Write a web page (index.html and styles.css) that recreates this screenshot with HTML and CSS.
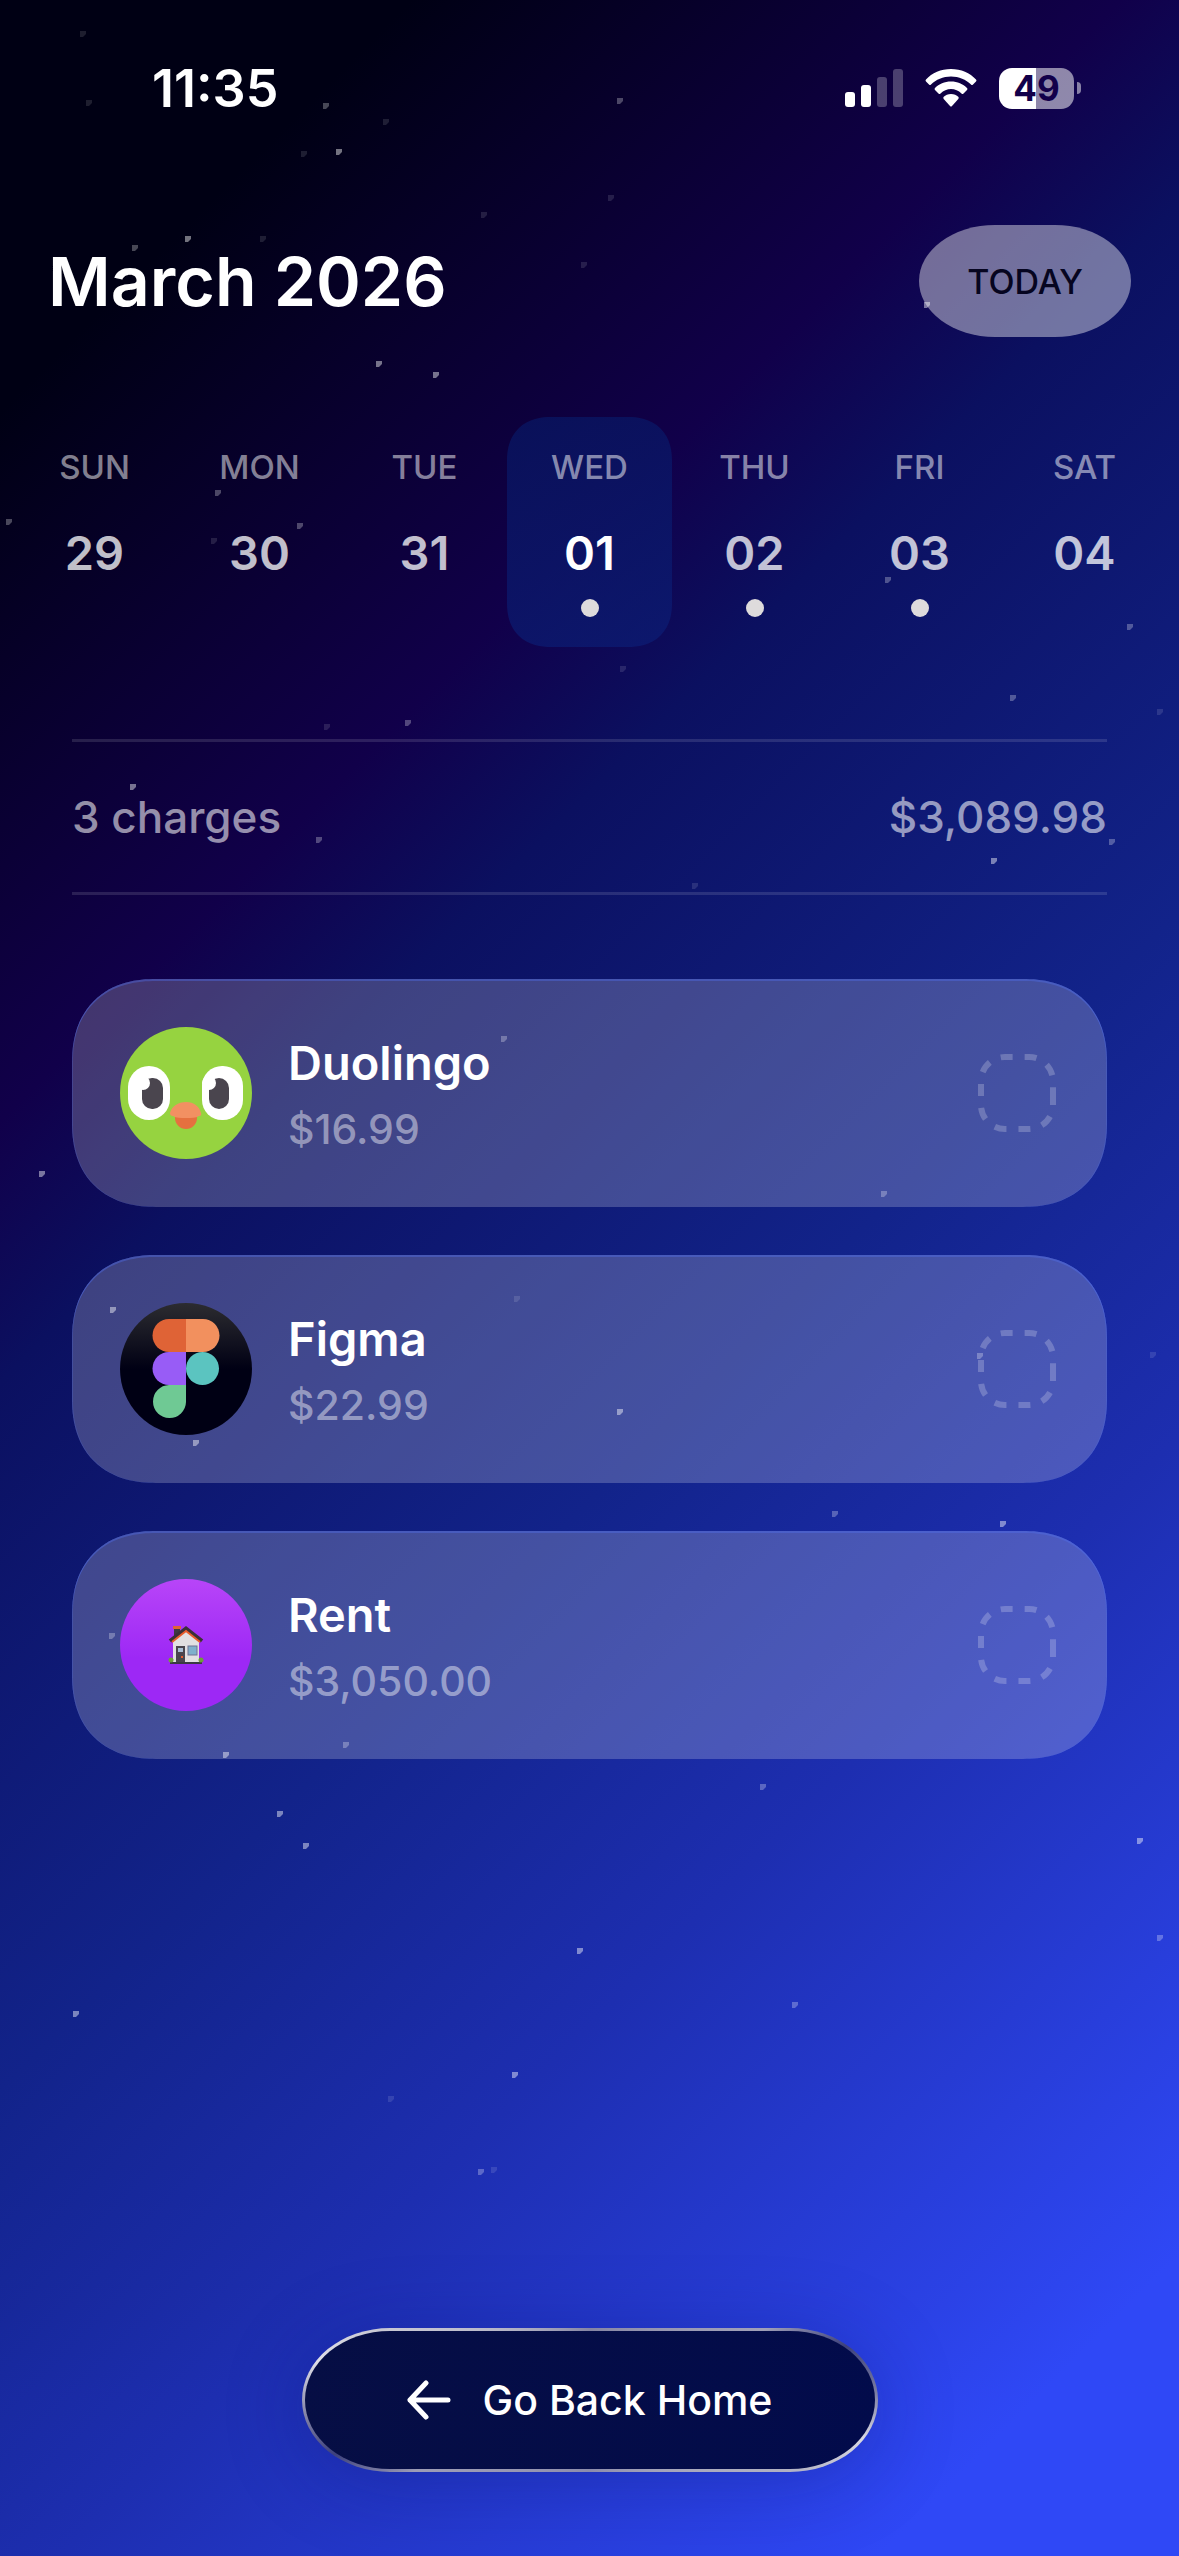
FILE: index.html
```html
<!DOCTYPE html>
<html lang="en">
<head>
<meta charset="utf-8">
<meta name="viewport" content="width=device-width, initial-scale=1">
<title>March 2026</title>
<link rel="stylesheet" href="styles.css">
</head>
<body>
<div class="screen">
  <header class="status">
    <time class="clock">11:35</time>
    <div class="indicators">
      <svg class="signal" viewBox="0 0 58 38" role="img" aria-label="Signal">
        <g fill="#fff"><rect x="0" y="23" width="10" height="15" rx="3"/><rect x="16" y="16" width="10" height="22" rx="3"/></g>
        <g fill="#fff" opacity=".25"><rect x="32" y="8" width="10" height="30" rx="3"/><rect x="48" y="0" width="10" height="38" rx="3"/></g>
      </svg>
      <svg class="wifi" viewBox="0 0 52 38" role="img" aria-label="Wi-Fi">
        <g fill="#fff">
          <path d="M26 0C36 0 45 4 51 10.500Q52 11.500 51 12.500L48 15.500Q47 16.500 46 15.500C41 10.500 34 7.500 26 7.500S11 10.500 6 15.500Q5 16.500 4 15.500L1 12.500Q0 11.500 1 10.500C7 4 16 0 26 0Z"/>
          <path d="M26 12.500C32.500 12.500 38 15 42 19Q43 20 42 21L38.500 24.500Q37.500 25.500 36.500 24.500C33.500 21.700 30 20 26 20S18.500 21.700 15.500 24.500Q14.500 25.500 13.500 24.500L10 21Q9 20 10 19C14 15 19.500 12.500 26 12.500Z"/>
          <path d="M26 25C29 25 31.500 26 33.500 28Q34 29 33.300 30L27 37Q26 38 25 37L18.700 30Q18 29 18.500 28C20.500 26 23 25 26 25Z"/>
        </g>
      </svg>
      <div class="battery"><span class="level">49</span></div>
    </div>
  </header>

  <div class="heading">
    <h1>March 2026</h1>
    <button class="today" type="button">TODAY</button>
  </div>

  <nav class="week" aria-label="Week">
    <button class="day" type="button"><span class="name">SUN</span><span class="num">29</span></button>
    <button class="day" type="button"><span class="name">MON</span><span class="num">30</span></button>
    <button class="day" type="button"><span class="name">TUE</span><span class="num">31</span></button>
    <button class="day selected" type="button" aria-current="date"><span class="name">WED</span><span class="num">01</span><span class="dot"></span></button>
    <button class="day" type="button"><span class="name">THU</span><span class="num">02</span><span class="dot"></span></button>
    <button class="day" type="button"><span class="name">FRI</span><span class="num">03</span><span class="dot"></span></button>
    <button class="day" type="button"><span class="name">SAT</span><span class="num">04</span></button>
  </nav>

  <main class="content">
    <div class="summary"><span>3 charges</span><span>$3,089.98</span></div>

    <ul class="charges">
      <li>
        <label class="card">
          <svg class="avatar" viewBox="0 0 132 132" aria-hidden="true">
            <circle cx="66" cy="66" r="66" fill="#96d340"/>
            <rect x="8" y="39" width="42" height="54" rx="21" fill="#fff"/>
            <rect x="82" y="39" width="41" height="54" rx="20" fill="#fff"/>
            <rect x="22" y="51" width="21" height="31" rx="10" fill="#4a454e"/>
            <rect x="89" y="51" width="20" height="31" rx="10" fill="#4a454e"/>
            <circle cx="23" cy="56" r="7" fill="#fff"/>
            <circle cx="89" cy="56" r="7" fill="#fff"/>
            <path d="M55 86h22v5a11 11 0 0 1-22 0Z" fill="#e5703f"/>
            <path d="M50 86C52 79 58 75 66 75S79 79 81 86Q82 89 79 89C76 91 71 91 66 91S56 91 53 89Q50 89 50 86Z" fill="#f29062"/>
          </svg>
          <span class="info"><span class="title">Duolingo</span><span class="price">$16.99</span></span>
          <span class="check"><input type="checkbox"><svg viewBox="0 0 84 84" aria-hidden="true"><path d="M78 42V54A24 24 0 0 1 54 78H30A24 24 0 0 1 6 54V30A24 24 0 0 1 30 6H54A24 24 0 0 1 78 30Z"/></svg></span>
        </label>
      </li>
      <li>
        <label class="card">
          <svg class="avatar" viewBox="0 0 132 132" aria-hidden="true">
            <defs><linearGradient id="ink" x2="0" y2="1"><stop offset="0" stop-color="#2c2c30"/><stop offset=".5" stop-color="#000014"/></linearGradient></defs>
            <circle cx="66" cy="66" r="66" fill="url(#ink)"/>
            <path d="M66 16H49a16.500 16.500 0 0 0 0 33H66Z" fill="#df6336"/>
            <path d="M66 16h17a16.500 16.500 0 0 1 0 33H66Z" fill="#f2905e"/>
            <path d="M66 49H49a16.500 16.500 0 0 0 0 33H66Z" fill="#985cf6"/>
            <circle cx="82.500" cy="65.500" r="16.500" fill="#5bc4c0"/>
            <path d="M66 82H49a16.500 16.500 0 1 0 17 17Z" fill="#6fc994"/>
          </svg>
          <span class="info"><span class="title">Figma</span><span class="price">$22.99</span></span>
          <span class="check"><input type="checkbox"><svg viewBox="0 0 84 84" aria-hidden="true"><path d="M78 42V54A24 24 0 0 1 54 78H30A24 24 0 0 1 6 54V30A24 24 0 0 1 30 6H54A24 24 0 0 1 78 30Z"/></svg></span>
        </label>
      </li>
      <li>
        <label class="card">
          <svg class="avatar" viewBox="0 0 132 132" aria-hidden="true">
            <defs><linearGradient id="violet" x2="0" y2="1"><stop offset="0" stop-color="#b845f8"/><stop offset=".6" stop-color="#9d28f5"/></linearGradient></defs>
            <circle cx="66" cy="66" r="66" fill="url(#violet)"/>
            <rect x="54" y="48" width="6" height="10" fill="#3c3a42"/>
            <rect x="53" y="47" width="8" height="3" fill="#df6336"/>
            <path d="M53 61 66 50 79 61V84H53Z" fill="#e2e0e2"/>
            <path d="M50 62 66 49.500 82 62" fill="none" stroke="#3a3036" stroke-width="4"/>
            <path d="M52 63 66 52 80 63" fill="none" stroke="#e85c2c" stroke-width="2"/>
            <rect x="56" y="67" width="9" height="16" fill="#4a454e"/>
            <rect x="58" y="69" width="5" height="4" fill="#a9bdd4"/>
            <rect x="61" y="77" width="2" height="2" fill="#e85c2c"/>
            <rect x="68" y="67" width="9" height="9" fill="#7fb0cc" stroke="#707294" stroke-width="1"/>
            <path d="M50 84h32" stroke="#3a3a42" stroke-width="2"/>
            <circle cx="51" cy="81" r="2.500" fill="#6f9e3a"/>
            <circle cx="81" cy="81" r="2.500" fill="#6f9e3a"/>
          </svg>
          <span class="info"><span class="title">Rent</span><span class="price">$3,050.00</span></span>
          <span class="check"><input type="checkbox"><svg viewBox="0 0 84 84" aria-hidden="true"><path d="M78 42V54A24 24 0 0 1 54 78H30A24 24 0 0 1 6 54V30A24 24 0 0 1 30 6H54A24 24 0 0 1 78 30Z"/></svg></span>
        </label>
      </li>
    </ul>
  </main>

  <footer class="footer">
    <button class="home" type="button">
      <svg viewBox="0 0 44 40" aria-hidden="true"><path d="M41 20H3M19 3 3 20 19 37"/></svg>
      <span>Go Back Home</span>
    </button>
  </footer>

  <svg class="stars" viewBox="0 0 1179 2556" preserveAspectRatio="xMidYMin slice" aria-hidden="true">
    <defs><path id="s" d="M0 0H6V3L3 6H0Z"/></defs>
    <g opacity=".45">
      <use href="#s" x="336" y="149"/><use href="#s" x="185" y="236"/><use href="#s" x="376" y="361"/><use href="#s" x="433" y="372"/><use href="#s" x="924" y="302"/><use href="#s" x="130" y="784"/><use href="#s" x="991" y="858"/><use href="#s" x="39" y="1171"/><use href="#s" x="110" y="1307"/><use href="#s" x="193" y="1440"/><use href="#s" x="617" y="1409"/><use href="#s" x="1000" y="1521"/><use href="#s" x="223" y="1752"/><use href="#s" x="277" y="1811"/><use href="#s" x="303" y="1843"/><use href="#s" x="1137" y="1838"/><use href="#s" x="577" y="1948"/><use href="#s" x="73" y="2011"/><use href="#s" x="512" y="2072"/>
    </g>
    <g opacity=".28">
      <use href="#s" x="215" y="490"/><use href="#s" x="323" y="103"/><use href="#s" x="617" y="98"/><use href="#s" x="132" y="245"/><use href="#s" x="6" y="519"/><use href="#s" x="297" y="523"/><use href="#s" x="885" y="577"/><use href="#s" x="1127" y="624"/><use href="#s" x="1010" y="695"/><use href="#s" x="405" y="720"/><use href="#s" x="316" y="837"/><use href="#s" x="1109" y="839"/><use href="#s" x="501" y="1036"/><use href="#s" x="881" y="1191"/><use href="#s" x="977" y="1353"/><use href="#s" x="832" y="1511"/><use href="#s" x="109" y="1633"/><use href="#s" x="343" y="1742"/><use href="#s" x="760" y="1784"/><use href="#s" x="1157" y="1935"/><use href="#s" x="792" y="2002"/><use href="#s" x="478" y="2169"/>
    </g>
    <g opacity=".12">
      <use href="#s" x="80" y="31"/><use href="#s" x="86" y="100"/><use href="#s" x="383" y="119"/><use href="#s" x="301" y="151"/><use href="#s" x="608" y="195"/><use href="#s" x="481" y="212"/><use href="#s" x="260" y="236"/><use href="#s" x="581" y="262"/><use href="#s" x="211" y="538"/><use href="#s" x="620" y="666"/><use href="#s" x="324" y="724"/><use href="#s" x="1157" y="709"/><use href="#s" x="692" y="883"/><use href="#s" x="514" y="1296"/><use href="#s" x="1150" y="1352"/><use href="#s" x="388" y="2096"/><use href="#s" x="491" y="2167"/>
    </g>
  </svg>
</div>
</body>
</html>
```
FILE: styles.css
```css
* { box-sizing: border-box; }

body {
  margin: 0;
  font-family: Inter, "Liberation Sans", sans-serif;
  color: #fff;
  background: #000014;
}

button {
  font: inherit;
  color: inherit;
  border: 0;
  padding: 0;
  background: none;
}

.screen {
  position: relative;
  display: flex;
  flex-direction: column;
  min-height: 100vh;
  background: linear-gradient(135deg, #000014 0%, #000014 11%, #11004a 30%, #0b1060 37%, #12238a 56%, #1d2eb0 70%, #2f48f6 92%);
}

.stars {
  position: absolute;
  inset: 0;
  width: 100%;
  height: 100%;
  fill: #fff;
  pointer-events: none;
}

/* Status bar */
.status {
  display: flex;
  justify-content: space-between;
  align-items: center;
  height: 176px;
  padding: 0 98px 0 152px;
}

.clock { font-size: 52px; font-weight: 600; }

.indicators { display: flex; align-items: center; gap: 22px; }
.signal { width: 58px; height: 38px; }
.wifi { width: 52px; height: 38px; }

.battery { display: flex; align-items: center; gap: 3px; }
.battery::after {
  content: "";
  width: 4px;
  height: 12px;
  border-radius: 0 6px 6px 0;
  background: rgba(255, 255, 255, .5);
}
.level {
  width: 75px;
  height: 41px;
  border-radius: 13px;
  font-size: 35px;
  line-height: 41px;
  font-weight: 700;
  text-align: center;
  color: #12004a;
  background: linear-gradient(90deg, #fff 50%, rgba(255, 255, 255, .53) 50%);
}

/* Month and week */
.heading {
  display: flex;
  justify-content: space-between;
  align-items: center;
  margin-top: 49px;
  padding: 0 48px;
}
h1 { margin: 0; font-size: 68px; line-height: 84px; font-weight: 600; }

.today {
  height: 112px;
  padding: 0 48px;
  border-radius: 76px / 56px;
  font-size: 34px;
  font-weight: 500;
  color: #060520;
  background: rgba(255, 255, 255, .42);
}

.week {
  display: grid;
  grid-template-columns: repeat(7, 1fr);
  margin-top: 80px;
  padding: 0 12px;
}
.day {
  display: flex;
  flex-direction: column;
  align-items: center;
  height: 230px;
  padding-top: 30px;
  border-radius: 44px;
}
.day.selected { background: linear-gradient(160deg, rgba(8, 22, 98, .75), rgba(12, 28, 116, .75)); }
.name { font-size: 33px; line-height: 40px; font-weight: 500; color: rgba(255, 255, 255, .52); }
.num { margin-top: 36px; font-size: 47px; line-height: 60px; font-weight: 600; color: rgba(255, 255, 255, .75); }
.selected .num { color: #fff; }
.dot { width: 18px; height: 18px; margin-top: 16px; border-radius: 50%; background: #dedbdc; }

/* Charges */
.content { padding: 92px 72px 0; }

.summary {
  display: flex;
  justify-content: space-between;
  align-items: center;
  height: 156px;
  border: solid rgba(255, 255, 255, .12);
  border-width: 3px 0;
  font-size: 44px;
  font-weight: 500;
  color: rgba(255, 255, 255, .57);
}

.charges {
  display: flex;
  flex-direction: column;
  gap: 48px;
  margin: 84px 0 0;
  padding: 0;
  list-style: none;
}

.card {
  display: flex;
  align-items: center;
  gap: 36px;
  height: 228px;
  padding: 0 48px;
  border-radius: 84px;
  background: rgba(255, 255, 255, .21);
  box-shadow: inset 0 2px 0 rgba(80, 110, 235, .4), inset 1px 0 0 rgba(80, 110, 235, .25), inset -1px 0 0 rgba(80, 110, 235, .25);
}
.avatar { width: 132px; height: 132px; flex: none; }
.info { display: flex; flex-direction: column; flex: 1; gap: 8px; padding-top: 3px; }
.title { font-size: 47px; line-height: 60px; font-weight: 600; }
.price { font-size: 41px; line-height: 56px; font-weight: 500; color: rgba(255, 255, 255, .46); }

.check { display: grid; width: 84px; height: 84px; }
.check > * { grid-area: 1 / 1; width: 84px; height: 84px; margin: 0; }
.check input { appearance: none; }
.check path {
  fill: none;
  stroke: rgba(255, 255, 255, .22);
  stroke-width: 6;
  stroke-dasharray: 12;
}

/* Bottom action */
.footer {
  display: flex;
  justify-content: center;
  margin-top: auto;
  padding: 48px 48px 84px;
}
.home {
  display: flex;
  justify-content: center;
  align-items: center;
  gap: 32px;
  width: 576px;
  height: 144px;
  border: 3px solid transparent;
  border-radius: 88px / 72px;
  font-size: 41px;
  font-weight: 500;
  background:
    linear-gradient(100deg, #060e44, #020b4b) padding-box,
    conic-gradient(from 0deg, #8585a4 0deg, #a0a0b8 68deg, #3c407c 78deg, #77799f 88deg, #d8d8e2 98deg, #b0b0c2 110deg, #8c8cac 180deg, #9c9cb6 248deg, #3c407c 258deg, #8c8cac 268deg, #e0e0e8 278deg, #c8c8d4 288deg, #8585a4 360deg) border-box;
  box-shadow: 0 10px 80px rgba(10, 20, 110, .3);
}
.home svg { width: 44px; height: 40px; fill: none; stroke: #fff; stroke-width: 5; stroke-linecap: round; stroke-linejoin: round; }

@supports (corner-shape: squircle) {
  .card, .day { corner-shape: superellipse(1.2); }
}
```
